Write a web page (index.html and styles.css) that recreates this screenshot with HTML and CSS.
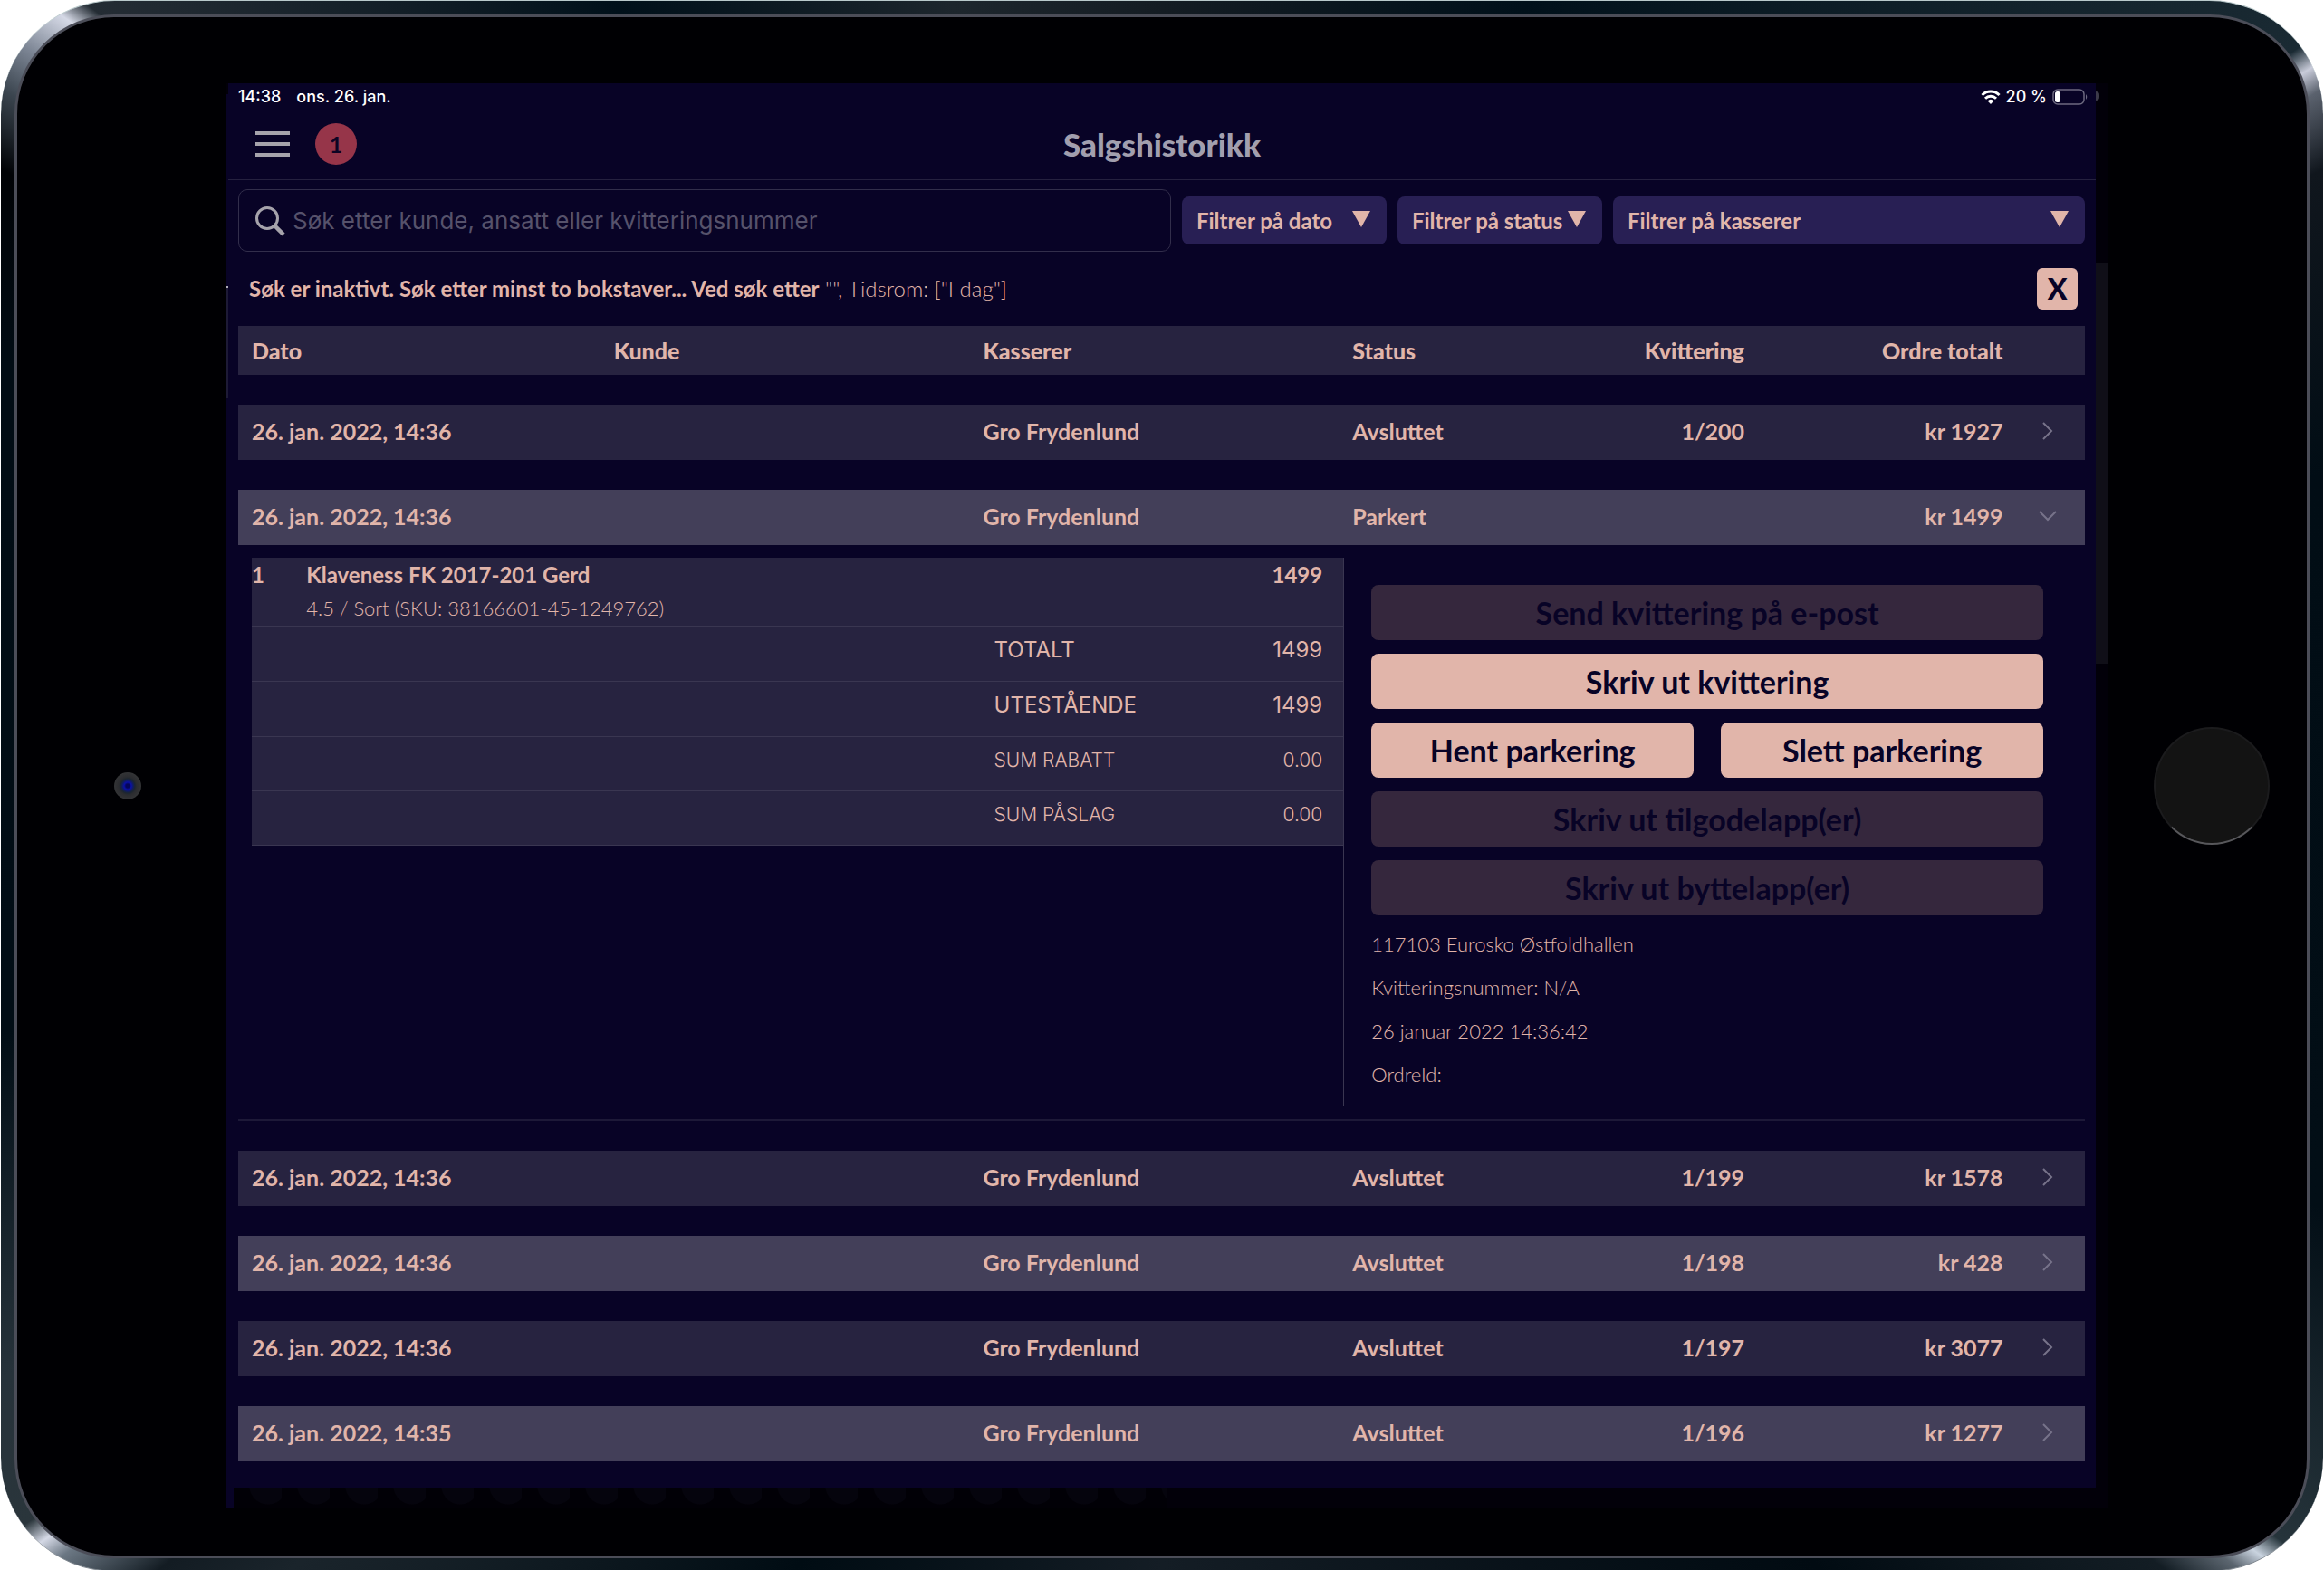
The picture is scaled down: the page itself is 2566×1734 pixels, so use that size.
FILE: index.html
```html
<!DOCTYPE html>
<html lang="nb">
<head>
<meta charset="utf-8">
<meta name="viewport" content="width=device-width, initial-scale=1">
<title>Salgshistorikk</title>
<link rel="stylesheet" href="styles.css">
</head>
<body>
<div class="device">
  <div class="glass">
    <div class="camera-side"><span class="camera"></span></div>
    <div class="screen">
      <div class="edge-nub"></div>
      <div class="edge-strip"></div>
      <main class="app">
        <div class="statusbar">
          <span>14:38</span><span>ons. 26. jan.</span>
          <span class="status-right">
            <svg class="wifi" viewBox="0 0 22 16" width="22" height="16" aria-hidden="true">
              <g fill="none" stroke="#fff" stroke-width="3">
                <path d="M1.5 6 A13.5 13.5 0 0 1 20.500 6"/><path d="M5 9.800 A8.500 8.500 0 0 1 17 9.800"/>
              </g>
              <path d="M11 16 L7.600 12.400 A5 5 0 0 1 14.400 12.400 Z" fill="#fff"/>
            </svg>
            <span>20 %</span>
            <svg viewBox="0 0 40 18" width="40" height="18" aria-hidden="true">
              <rect x="1" y="1" width="34" height="16" rx="5" fill="none" stroke="#6d6a80" stroke-width="1.500"/>
              <rect x="3" y="3" width="6" height="12" rx="2.500" fill="#fff"/>
              <path d="M37 6 Q39.500 9 37 12 Z" fill="#6d6a80"/>
            </svg>
          </span>
        </div>
        <header class="topbar">
          <div class="top-left">
            <button class="menu" type="button" aria-label="Meny"><span></span><span></span><span></span></button>
            <span class="badge">1</span>
          </div>
          <h1>Salgshistorikk</h1>
        </header>
        <div class="toolbar">
          <div class="search">
            <svg viewBox="0 0 34 34" width="34" height="34" aria-hidden="true">
              <circle cx="14" cy="14" r="11.500" fill="none" stroke="#a6a3ab" stroke-width="3"/>
              <path d="M22 22 L32 32" stroke="#a6a3ab" stroke-width="4.500"/>
            </svg>
            <input type="text" aria-label="Søk" placeholder="Søk etter kunde, ansatt eller kvitteringsnummer">
          </div>
          <div class="filter">
            <select aria-label="Filtrer på dato"><option>Filtrer på dato</option></select>
            <svg viewBox="0 0 20 18" width="20" height="18" aria-hidden="true"><path d="M0 0H20L10 18Z"/></svg>
          </div>
          <div class="filter">
            <select aria-label="Filtrer på status"><option>Filtrer på status</option></select>
            <svg viewBox="0 0 20 18" width="20" height="18" aria-hidden="true"><path d="M0 0H20L10 18Z"/></svg>
          </div>
          <div class="filter filter-wide">
            <select aria-label="Filtrer på kasserer"><option>Filtrer på kasserer</option></select>
            <svg viewBox="0 0 20 18" width="20" height="18" aria-hidden="true"><path d="M0 0H20L10 18Z"/></svg>
          </div>
        </div>
        <div class="notice">
          <p><strong>Søk er inaktivt. Søk etter minst to bokstaver... Ved søk etter</strong> "", Tidsrom: ["I dag"]</p>
          <button class="clear" type="button">X</button>
        </div>
        <table class="orders">
          <colgroup><col class="c-date"><col class="c-name"><col class="c-name"><col class="c-status"><col class="c-receipt"><col class="c-total"><col></colgroup>
          <thead>
            <tr><th>Dato</th><th>Kunde</th><th>Kasserer</th><th>Status</th><th class="num">Kvittering</th><th class="num">Ordre totalt</th><th></th></tr>
          </thead>
          <tbody>
            <tr class="order"><td>26. jan. 2022, 14:36</td><td></td><td>Gro Frydenlund</td><td>Avsluttet</td><td class="num">1/200</td><td class="num">kr 1927</td><td class="arrow"><svg viewBox="0 0 12 20" width="12" height="20"><path d="M1 1L10 10L1 19"/></svg></td></tr>
            <tr class="order light"><td>26. jan. 2022, 14:36</td><td></td><td>Gro Frydenlund</td><td>Parkert</td><td></td><td class="num">kr 1499</td><td class="arrow open"><svg viewBox="0 0 20 12" width="20" height="12"><path d="M1 1L10 10L19 1"/></svg></td></tr>
            <tr class="detail-row">
              <td colspan="7">
                <div class="detail">
                  <div class="receipt">
                    <table class="lines">
                      <colgroup><col class="l-qty"><col><col class="l-label"><col class="l-sum"></colgroup>
                      <tbody>
                        <tr class="item"><td>1</td><td colspan="2">Klaveness FK 2017-201 Gerd<small>4.5 / Sort (SKU: 38166601-45-1249762)</small></td><td class="num">1499</td></tr>
                        <tr class="strong"><td colspan="2"></td><td>TOTALT</td><td class="num">1499</td></tr>
                        <tr class="strong"><td colspan="2"></td><td>UTESTÅENDE</td><td class="num">1499</td></tr>
                        <tr><td colspan="2"></td><td>SUM RABATT</td><td class="num">0.00</td></tr>
                        <tr><td colspan="2"></td><td>SUM PÅSLAG</td><td class="num">0.00</td></tr>
                      </tbody>
                    </table>
                  </div>
                  <div class="side">
                    <div class="actions">
                      <button type="button" disabled>Send kvittering på e-post</button>
                      <button type="button">Skriv ut kvittering</button>
                      <div class="pair">
                        <button type="button">Hent parkering</button>
                        <button type="button">Slett parkering</button>
                      </div>
                      <button type="button" disabled>Skriv ut tilgodelapp(er)</button>
                      <button type="button" disabled>Skriv ut byttelapp(er)</button>
                    </div>
                    <div class="meta">
                      <p>117103 Eurosko Østfoldhallen</p>
                      <p>Kvitteringsnummer: N/A</p>
                      <p>26 januar 2022 14:36:42</p>
                      <p>OrdreId:</p>
                    </div>
                  </div>
                </div>
              </td>
            </tr>
            <tr class="order"><td>26. jan. 2022, 14:36</td><td></td><td>Gro Frydenlund</td><td>Avsluttet</td><td class="num">1/199</td><td class="num">kr 1578</td><td class="arrow"><svg viewBox="0 0 12 20" width="12" height="20"><path d="M1 1L10 10L1 19"/></svg></td></tr>
            <tr class="order light"><td>26. jan. 2022, 14:36</td><td></td><td>Gro Frydenlund</td><td>Avsluttet</td><td class="num">1/198</td><td class="num">kr 428</td><td class="arrow"><svg viewBox="0 0 12 20" width="12" height="20"><path d="M1 1L10 10L1 19"/></svg></td></tr>
            <tr class="order"><td>26. jan. 2022, 14:36</td><td></td><td>Gro Frydenlund</td><td>Avsluttet</td><td class="num">1/197</td><td class="num">kr 3077</td><td class="arrow"><svg viewBox="0 0 12 20" width="12" height="20"><path d="M1 1L10 10L1 19"/></svg></td></tr>
            <tr class="order light"><td>26. jan. 2022, 14:35</td><td></td><td>Gro Frydenlund</td><td>Avsluttet</td><td class="num">1/196</td><td class="num">kr 1277</td><td class="arrow"><svg viewBox="0 0 12 20" width="12" height="20"><path d="M1 1L10 10L1 19"/></svg></td></tr>
          </tbody>
        </table>
      </main>
      <div class="dots"></div>
    </div>
    <div class="home-side"><span class="home"></span></div>
  </div>
</div>
</body>
</html>
```
FILE: styles.css
```css
:root {
  --bg: #080326;
  --peach: #e1b5aa;
  --row: #272340;
  --row-light: #433f59;
  --display: Lato, "Open Sans", sans-serif;
  --system: Inter, Roboto, sans-serif;
}

* { box-sizing: border-box; }

body {
  margin: 0;
  background: #fff;
  color: var(--peach);
  font: 700 25px/32px var(--display);
}

button, input, select { font: inherit; color: inherit; }
h1, p { margin: 0; }

/* Tablet body: metal rim with a bright glint at each corner */
.device {
  margin: 0 1px;
  padding: 15px 15px 14px;
  border-top: 1px solid #b9c9cb;
  border-bottom: 1px solid #7c848c;
  border-radius: 126px;
  background: conic-gradient(
    #141c23 0deg, #00101a 25deg, #1a2a33 57deg, #c9ccda 58deg, #5b626e 59deg, #10161d 62deg,
    #010d15 75deg, #020e16 110deg, #26343b 124deg, #c9d3df 125deg, #5b656f 126deg, #131d24 128deg,
    #010b12 140deg, #141d25 180deg, #000c13 205deg, #1a242b 228deg, #131c23 232deg, #6b7783 235deg,
    #d5d9e6 236deg, #2a353b 237deg, #26323a 243deg, #010d15 258deg, #010c14 290deg, #000205 298deg,
    #3b454f 301deg, #7c8594 303deg, #d5d9e6 305deg, #242c34 306deg, #00101a 325deg, #1d262d 345deg, #141c23 360deg);
}

.glass {
  display: grid;
  grid-template-columns: 231px 1fr 219px;
  padding: 73px 0 53px;
  border: 3px solid #4b4d58;
  border-radius: 110px;
  background: #000003;
}

.camera-side, .home-side { display: flex; align-items: center; justify-content: center; padding-bottom: 21px; }

.camera {
  width: 30px;
  height: 30px;
  margin-left: 12px;
  border-radius: 50%;
  background: radial-gradient(circle, #05055a 0 2px, #0a10a8 4px, #101c62 6px, #1c2630 8px, #2b2c30 10px, #333436 15px);
}

.home {
  width: 128px;
  height: 130px;
  margin-left: 8px;
  border: 2px solid #1b1b1d;
  border-bottom-color: #57575b;
  border-radius: 50%;
  background: #131313;
}

.screen {
  position: relative;
  padding: 0 14px 0 2px;
  background: #020009;
}

.screen::before {
  content: "";
  position: absolute;
  top: 12px;
  bottom: 0;
  left: 0;
  width: 9px;
  background: linear-gradient(#b0aeb8, #b0aeb8) 0 212px / 2px 2px no-repeat, linear-gradient(#1d1a36, #1d1a36) 0 214px / 2px 122px no-repeat, #080326;
}

.edge-strip {
  position: absolute;
  top: 198px;
  right: 0;
  width: 14px;
  height: 443px;
  background: #100f18;
}

.edge-nub {
  position: absolute;
  top: 9px;
  right: 10px;
  width: 4px;
  height: 10px;
  border-radius: 0 5px 5px 0;
  background: #3d3b49;
}

.dots {
  position: relative;
  width: 50%;
  height: 22px;
  margin-left: 6px;
  background: radial-gradient(circle at 38px -2px, #05040d 20px, transparent 21px) 0 0 / 53px 22px, #010006;
}

.app {
  position: relative;
  padding: 0 12px 29px 11px;
  background: var(--bg);
}

.statusbar {
  display: flex;
  gap: 17px;
  height: 30px;
  color: #fff;
  font: 500 18px/30px var(--system);
}

.status-right {
  display: flex;
  align-items: center;
  gap: 6px;
  margin-left: auto;
  margin-right: -4px;
}

.topbar {
  display: grid;
  grid-template-columns: 1fr auto 1fr;
  align-items: center;
  height: 77px;
  margin: 0 -12px 0 -11px;
  padding: 0 30px 2px;
  border-bottom: 1px solid #25213f;
}

.top-left { display: flex; align-items: center; gap: 28px; }

.menu {
  display: flex;
  flex-direction: column;
  gap: 8px;
  width: 38px;
  padding: 0;
  border: 0;
  background: none;
}

.menu span { width: 100%; height: 4px; background: #a6a3ab; }

.badge {
  width: 46px;
  height: 46px;
  border-radius: 50%;
  background: #963549;
  color: #0d0424;
  line-height: 46px;
  text-align: center;
}

h1 { color: #a29fae; font-size: 35px; font-weight: 900; line-height: 40px; }

.toolbar { display: flex; align-items: center; gap: 12px; padding-top: 10px; }

.search {
  display: flex;
  flex: 103;
  align-items: center;
  gap: 8px;
  height: 69px;
  padding: 0 17px;
  border: 1px solid #322e4b;
  border-radius: 10px;
}

.search svg { flex: none; }

.search input {
  flex: 1;
  min-width: 0;
  padding: 0;
  border: 0;
  outline: 0;
  background: none;
  font: 400 26px/32px var(--system);
}

.search input::placeholder { color: #56526b; opacity: 1; }

.filter { position: relative; flex: none; width: 226px; }
.filter-wide { flex: 54; }

.filter select {
  display: block;
  width: 100%;
  height: 53px;
  padding: 0 16px;
  border: 0;
  border-radius: 8px;
  appearance: none;
  background: #281f54;
  font-size: 24px;
}

.filter svg { position: absolute; top: 16px; right: 18px; fill: var(--peach); pointer-events: none; }

.notice {
  display: flex;
  align-items: center;
  justify-content: space-between;
  padding: 18px 8px 18px 12px;
  font-size: 24px;
  font-weight: 300;
}

.notice strong { font-weight: 700; }

.clear {
  width: 45px;
  height: 46px;
  padding: 0;
  border: 0;
  border-radius: 6px;
  background: var(--peach);
  color: var(--bg);
  font-size: 32px;
  font-weight: 900;
}

table { width: 100%; border-spacing: 0; table-layout: fixed; }

.c-date { width: 19.6%; }
.c-name { width: 20%; }
.c-status { width: 12%; }
.c-receipt { width: 10.7%; }
.c-total { width: 14%; }

th { height: 54px; padding: 0 15px; background: var(--row); font-weight: 900; text-align: left; }

th.num, td.num { text-align: right; }

/* The transparent top border is the gap between rows */
.order td {
  height: 94px;
  padding: 0 15px 3px;
  border-top: 33px solid transparent;
  background: var(--row);
  background-clip: padding-box;
}

.order.light td { background-color: var(--row-light); }

.order .arrow { padding-left: 28px; }
.order .arrow.open { padding-left: 24px; }
.arrow svg { display: block; fill: none; stroke: #77738a; stroke-width: 2; }

.detail-row > td { padding: 0; border-bottom: 2px solid #1d1938; }

.detail {
  display: grid;
  grid-template-columns: 59fr 40fr;
  padding: 14px 0 15px 15px;
}

.receipt { border-right: 1px solid #3a3651; }

.lines { background: var(--row); font: 300 21px/32px var(--system); }
.l-qty { width: 5%; }
.l-label { width: 22%; }
.l-sum { width: 10%; }

.lines td { height: 60px; padding: 0 0 8px; border-bottom: 1px solid #3a3651; }
.lines td.num { padding-right: 23px; }
.lines .strong { font-size: 24px; font-weight: 400; }
.lines .strong td { height: 61px; }
.lines .item { font: 700 24px/38px var(--display); }
.lines .item td { height: 76px; padding-top: 0; padding-bottom: 0; vertical-align: top; }
.lines small { display: block; font-size: 22px; font-weight: 300; line-height: 36px; }

.side { padding: 30px 46px 0 30px; }

.actions { display: flex; flex-direction: column; gap: 15px; }
.pair { display: grid; grid-template-columns: 1fr 1fr; gap: 30px; }

.actions button {
  height: 61px;
  padding: 0;
  border: 0;
  border-radius: 8px;
  background: var(--peach);
  color: var(--bg);
  font-size: 34px;
  font-weight: 700;
}

.actions button:disabled { background: #35273d; }

.meta { padding: 8px 0 10px; font-size: 22px; font-weight: 300; line-height: 48px; }
```
